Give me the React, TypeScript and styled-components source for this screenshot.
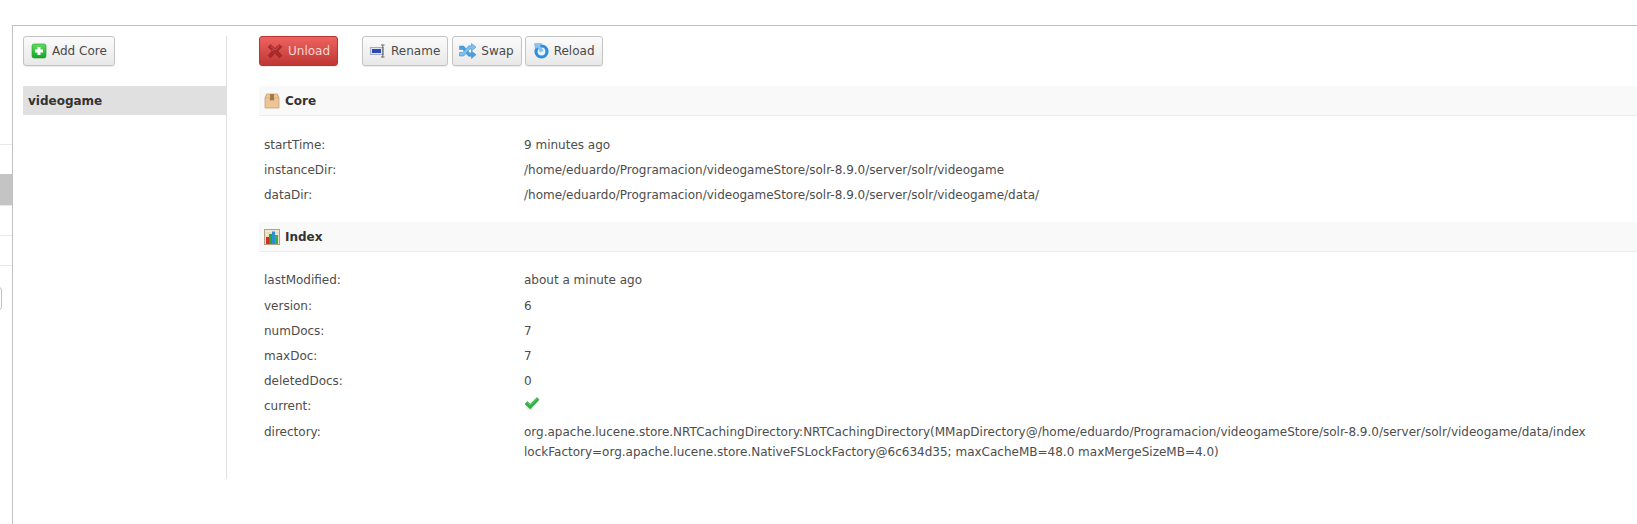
import React from "react";
import styled, { createGlobalStyle } from "styled-components";

const Global = createGlobalStyle`
  html, body { margin: 0; padding: 0; background: #fff; }
  body { font-family: "DejaVu Sans", sans-serif; font-size: 12px; color: #4d4d4d; overflow: hidden; }
`;

const Page = styled.div`
  display: flex;
  width: 1637px;
  height: 524px;
  padding-top: 25px;
  box-sizing: border-box;
`;

const Nav = styled.nav`
  width: 12px;
  flex: none;
  display: flex;
  flex-direction: column;
  padding-top: 119px;
  overflow: hidden;
`;

const NavItem = styled.div<{ $h?: number }>`
  height: ${(p) => p.$h ?? 30}px;
  box-sizing: border-box;
  border-top: 1px solid #e8e8e8;
`;

const NavActive = styled.div`
  height: 31px;
  background: #c4c4c4;
`;

const NavStub = styled.div`
  margin-left: -10px;
  width: 12px;
  height: 23px;
  box-sizing: border-box;
  border: 1px solid #c0c0c0;
  border-radius: 3px;
`;

const Frame = styled.main`
  flex: 1;
  display: flex;
  align-items: flex-start;
  border-top: 1px solid #c0c0c0;
  border-left: 1px solid #c0c0c0;
  padding: 10px 0 0 10px;
  min-width: 0;
`;

const Sidebar = styled.aside`
  width: 203px;
  height: 443px;
  flex: none;
  border-right: 1px solid #e0e0e0;
`;

const CoreItem = styled.div`
  margin-top: 20px;
  height: 29px;
  padding-left: 5px;
  background: #e0e0e0;
  font-weight: 700;
  line-height: 30px;
  color: #333;
`;

const Content = styled.section`
  flex: 1;
  min-width: 0;
  margin-left: 32px;
`;

const Toolbar = styled.div`
  display: flex;
  gap: 4px;
`;

const Button = styled.button`
  height: 30px;
  box-sizing: border-box;
  display: inline-flex;
  align-items: center;
  gap: 5px;
  padding: 0 7px;
  font: 12px "DejaVu Sans", sans-serif;
  border-radius: 3px;
  border: 1px solid #c4c4c4;
  color: #4a4a4a;
  background: linear-gradient(#fbfbfb, #e8e8e8);
  box-shadow: 0 1px 1px rgba(0, 0, 0, 0.08);
`;

const DangerButton = styled(Button)`
  border-color: #b93431;
  color: #f7d6d5;
  background: linear-gradient(#ee6360, #bf3734);
  margin-right: 20px;
`;

const ReloadButton = styled(Button)`
  margin-left: -1px;
`;

const SectionHead = styled.h2<{ $first?: boolean }>`
  display: flex;
  align-items: center;
  gap: 5px;
  height: 30px;
  box-sizing: border-box;
  margin: ${(p) => (p.$first ? "20px 0 0" : "0")};
  padding-left: 5px;
  background: #f9f9f9;
  border-bottom: 1px solid #ececec;
  font-size: 12px;
  font-weight: 700;
  color: #333;
`;

const List = styled.dl<{ $top: number; $bottom: number }>`
  margin: ${(p) => p.$top}px 0 ${(p) => p.$bottom}px;
`;

const Row = styled.div<{ $h?: number }>`
  display: flex;
  min-height: ${(p) => p.$h ?? 25}px;
  padding-left: 5px;
`;

const Label = styled.dt`
  width: 260px;
  flex: none;
  line-height: 20px;
  padding-top: 3px;
`;

const Value = styled.dd`
  margin: 0;
  flex: 1;
  line-height: 20px;
  padding-top: 3px;
`;

const Ico = styled.svg`
  flex: none;
  display: block;
  overflow: visible;
`;

const AddIcon = () => (
  <Ico width="16" height="16" viewBox="0 0 16 16">
    <defs>
      <linearGradient id="ga" x1="0" y1="0" x2="0" y2="1">
        <stop offset="0" stopColor="#63de5c" />
        <stop offset="1" stopColor="#0fa62a" />
      </linearGradient>
    </defs>
    <rect x="1" y="1" width="14" height="14" rx="2" fill="url(#ga)" stroke="#1f9a30" strokeWidth="0.6" />
    <path d="M6.500 4h3v2.500H12v3H9.500V12h-3V9.500H4v-3h2.500z" fill="#fff" />
  </Ico>
);

const UnloadIcon = () => (
  <Ico width="16" height="16" viewBox="0 0 16 16">
    <path d="M3.500 1.500 8 5.500l4.500-4L15 4l-4 4 4 4.500-2.500 2.500L8 10.500l-4.500 4.500L1 12.500 5 8 1 4z" fill="#a92a2a" stroke="#8e2020" strokeWidth="0.4" />
    <path d="M3.500 3 8 7l4.500-4M5 6.500l1.500 1.500" fill="none" stroke="#cf5553" strokeWidth="1" />
  </Ico>
);

const RenameIcon = () => (
  <Ico width="16" height="16" viewBox="0 0 16 16">
    <rect x="0.500" y="4.500" width="13" height="7" fill="#dfe5f0" stroke="#a3aec4" />
    <rect x="2" y="6" width="9" height="4" fill="#2b47b5" />
    <path d="M11 2h3.500M12.750 2v12M11 14h3.500" stroke="#666" strokeWidth="1" fill="none" />
  </Ico>
);

const SwapIcon = () => (
  <Ico width="16" height="16" viewBox="0 0 16 16">
    <path d="M-0.500 3h4.200L9.700 10H11.500V8L16 11.700 11.500 15.500V13.200H8.500L2.700 6.500H-0.500z" fill="#4b9fe0" stroke="#3a86c6" strokeWidth="0.5" />
    <path d="M-0.500 9.500H2.700L8.700 2.800H11.500V0.500L16 4.200 11.500 8V6H9.800L3.800 13H-0.500z" fill="#7cc0f0" stroke="#3a86c6" strokeWidth="0.5" />
  </Ico>
);

const ReloadIcon = () => (
  <Ico width="16" height="16" viewBox="0 0 16 16">
    <circle cx="8.500" cy="8.500" r="5.500" fill="#e8f3fb" stroke="#2f8fdc" strokeWidth="3.200" />
    <path d="M1.500 0.500H8.500L7 3 10 7.500 7.500 9 4.500 4.500 2.500 6z" fill="#8cc6ef" stroke="#5aa8e0" strokeWidth="0.5" />
  </Ico>
);

const BoxIcon = () => (
  <Ico width="16" height="16" viewBox="0 0 16 16">
    <path d="M2.500 1h11L15 5v10H1V5z" fill="#edc596" stroke="#c09a6b" strokeWidth="0.7" />
    <path d="M1 5h14" stroke="#d2a672" strokeWidth="0.7" />
    <path d="M6 1h4v7L8 7 6 8z" fill="#a4794a" />
  </Ico>
);

const ChartIcon = () => (
  <Ico width="16" height="16" viewBox="0 0 16 16">
    <rect x="0.500" y="0.500" width="15" height="15" fill="#f0e6d4" stroke="#b49f7e" />
    <path d="M1 4h14M1 7h14M1 10h14M1 13h14" stroke="#d8c8ac" strokeWidth="0.7" />
    <rect x="2" y="8" width="3" height="7" fill="#d32b2b" />
    <rect x="5" y="5" width="3" height="10" fill="#2aa13a" />
    <rect x="8" y="2.500" width="3" height="12.500" fill="#2b8fd8" />
    <rect x="11" y="6" width="3" height="9" fill="#3cb04a" />
  </Ico>
);

const CheckIcon = () => (
  <Ico width="16" height="16" viewBox="0 0 16 16">
    <path d="M1 10.500 3.500 13.500 7 15 15 5 13 3.500 6.500 11.500 3.500 8.500z" fill="#000" opacity="0.08" />
    <path d="M1 8 3.500 5.500 6.200 8.200 13 1.500 15 3.800 6.200 13z" fill="#2fb344" stroke="#1f9a33" strokeWidth="0.5" />
    <path d="M3.500 6.500 6.200 9.200 13 2.500" fill="none" stroke="#67d672" strokeWidth="0.8" />
  </Ico>
);

export default function App() {
  return (
    <Page>
      <Global />
      <Nav>
        <NavItem />
        <NavActive />
        <NavItem />
        <NavItem />
        <NavItem $h={22} />
        <NavStub />
      </Nav>
      <Frame>
        <Sidebar>
          <Button><AddIcon />Add Core</Button>
          <CoreItem>videogame</CoreItem>
        </Sidebar>
        <Content>
          <Toolbar>
            <DangerButton><UnloadIcon />Unload</DangerButton>
            <Button><RenameIcon />Rename</Button>
            <Button><SwapIcon />Swap</Button>
            <ReloadButton><ReloadIcon />Reload</ReloadButton>
          </Toolbar>
          <SectionHead $first><BoxIcon />Core</SectionHead>
          <List $top={16} $bottom={15}>
            <Row><Label>startTime:</Label><Value>9 minutes ago</Value></Row>
            <Row><Label>instanceDir:</Label><Value>/home/eduardo/Programacion/videogameStore/solr-8.9.0/server/solr/videogame</Value></Row>
            <Row><Label>dataDir:</Label><Value>/home/eduardo/Programacion/videogameStore/solr-8.9.0/server/solr/videogame/data/</Value></Row>
          </List>
          <SectionHead><ChartIcon />Index</SectionHead>
          <List $top={15} $bottom={0}>
            <Row $h={26}><Label>lastModified:</Label><Value>about a minute ago</Value></Row>
            <Row><Label>version:</Label><Value>6</Value></Row>
            <Row><Label>numDocs:</Label><Value>7</Value></Row>
            <Row><Label>maxDoc:</Label><Value>7</Value></Row>
            <Row><Label>deletedDocs:</Label><Value>0</Value></Row>
            <Row $h={26}><Label>current:</Label><Value><CheckIcon /></Value></Row>
            <Row>
              <Label>directory:</Label>
              <Value>
                org.apache.lucene.store.NRTCachingDirectory:NRTCachingDirectory(MMapDirectory@/home/eduardo/Programacion/videogameStore/solr-8.9.0/server/solr/videogame/data/index
                <br />
                lockFactory=org.apache.lucene.store.NativeFSLockFactory@6c634d35; maxCacheMB=48.0 maxMergeSizeMB=4.0)
              </Value>
            </Row>
          </List>
        </Content>
      </Frame>
    </Page>
  );
}
